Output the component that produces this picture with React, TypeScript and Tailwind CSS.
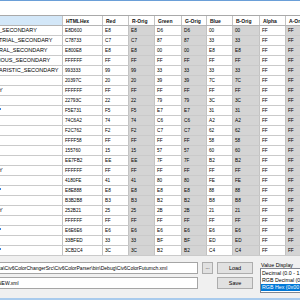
import React from 'react';

type Row = { name: string; kind?: 'text' | 'tick' | 'blank'; hex: string };

const rows: Row[] = [
  { name: '_SECONDARY', hex: 'E8D600' },
  { name: 'TRIAL_SECONDARY', hex: 'C78733' },
  { name: 'RAL_SECONDARY', hex: 'E800E8' },
  { name: 'IOUS_SECONDARY', hex: 'FFFFFF' },
  { name: 'ARISTIC_SECONDARY', hex: '993333' },
  { name: '', kind: 'blank', hex: '20397C' },
  { name: 'Y', hex: 'FFFFFF' },
  { name: '', kind: 'blank', hex: '22793C' },
  { name: '', kind: 'tick', hex: 'F5E731' },
  { name: '', kind: 'blank', hex: '74C6A2' },
  { name: '', kind: 'blank', hex: 'F2C762' },
  { name: '', kind: 'blank', hex: 'FFFF58' },
  { name: '', kind: 'blank', hex: '155760' },
  { name: '', kind: 'blank', hex: 'EE7FB2' },
  { name: 'Y', hex: 'FFFFFF' },
  { name: '', kind: 'blank', hex: '4180FE' },
  { name: '', kind: 'tick', hex: 'E8E888' },
  { name: '', kind: 'blank', hex: 'B3B2B8' },
  { name: 'Y', hex: '252B21' },
  { name: '', kind: 'blank', hex: 'FFFFFF' },
  { name: '', kind: 'tick', hex: 'E6E6E6' },
  { name: '', kind: 'blank', hex: '33BFED' },
  { name: '', kind: 'tick', hex: '3CB2C4' },
];

// column widths after the name column
const cols = [
  { label: 'HTMLHex', w: 'w-[40px]', orig: false },
  { label: 'Red', w: 'w-[26px]', orig: false },
  { label: 'R-Orig', w: 'w-[26px]', orig: true },
  { label: 'Green', w: 'w-[27px]', orig: false },
  { label: 'G-Orig', w: 'w-[25px]', orig: true },
  { label: 'Blue', w: 'w-[26px]', orig: false },
  { label: 'B-Orig', w: 'w-[27px]', orig: true },
  { label: 'Alpha', w: 'w-[26px]', orig: false },
  { label: 'A-Orig', w: 'w-[20px]', orig: true },
];

function cellValues(hex: string) {
  const r = hex.slice(0, 2);
  const g = hex.slice(2, 4);
  const b = hex.slice(4, 6);
  return [hex, r, r, g, g, b, b, 'FF', 'FF'];
}

export default function App() {
  return (
    <div
      className="w-[300px] h-[300px] overflow-hidden bg-[#f0f0f0] flex flex-col text-black"
      style={{ fontFamily: '"Liberation Sans", Arial, sans-serif' }}
    >
      <div className="h-px bg-[#6a9fd8] shrink-0" />
      <div className="h-[15px] bg-white shrink-0 border-b border-[#a9a9a9]" />

      {/* Grid */}
      <div className="bg-white shrink-0">
        {/* Header */}
        <div className="flex h-[10px] border-b border-[#b5b5b5] whitespace-nowrap">
          <div className="w-[63px] shrink-0 bg-[#d3e7f8] border-r border-[#c3c3c3]" />
          {cols.map((c) => (
            <div
              key={c.label}
              className={`${c.w} shrink-0 border-r border-[#c3c3c3] pl-[3px] text-[5px] font-bold leading-[10px] overflow-hidden text-[#111]`}
            >
              {c.label}
            </div>
          ))}
        </div>

        {rows.map((row, i) => (
          <div key={i} className="flex h-[10px] border-b border-[#cacaca] whitespace-nowrap">
            <div className="w-[63px] shrink-0 border-r border-[#c3c3c3] overflow-hidden relative text-[5.5px] leading-[9px]">
              {row.kind === 'tick' ? (
                <span className="absolute left-0 top-[2px] w-[1px] h-[2px] bg-[#3b87e0]" />
              ) : (
                <span className="ml-[-1px]">{row.name}</span>
              )}
            </div>
            {cellValues(row.hex).map((v, j) => (
              <div
                key={j}
                className={`${cols[j].w} shrink-0 border-r border-[#c3c3c3] pl-[2px] text-[4.7px] leading-[9px] overflow-hidden ${
                  cols[j].orig ? 'bg-[#d4d4d4]' : 'bg-white'
                }`}
              >
                {v}
              </div>
            ))}
          </div>
        ))}
      </div>

      {/* Bottom controls */}
      <div className="flex flex-1 text-[5px] whitespace-nowrap">
        <div className="w-[198px] shrink-0 flex flex-col pt-[6px] gap-[3px]">
          <div className="h-[12px] bg-white border border-[#a5a5a5] border-l-0 overflow-hidden leading-[10px]">
            <span className="ml-[-1px]">ta\Civ6ColorChangerSrc\Civ6ColorParser\bin\Debug\Civ6ColorFutumch.xml</span>
          </div>
          <div className="h-[12px] bg-white border border-[#a5a5a5] border-l-0 overflow-hidden leading-[10px]">
            <span className="ml-[-2px]">NEW.xml</span>
          </div>
        </div>
        <div className="ml-[4px] mt-[6px] w-[11px] h-[12px] bg-[#e1e1e1] border border-[#adadad] flex items-start justify-center leading-[8px]">
          ...
        </div>
        <div className="ml-[4px] w-[36px] flex flex-col pt-[6px] gap-[3px]">
          <div className="h-[12px] bg-[#e1e1e1] border border-[#adadad] flex items-center justify-center text-[5.5px]">
            Load
          </div>
          <div className="h-[12px] bg-[#e1e1e1] border border-[#adadad] flex items-center justify-center text-[5.5px]">
            Save
          </div>
        </div>
        <div className="ml-[5px] flex-1 flex flex-col pt-[6px] min-w-0">
          <div className="pl-[3px] text-[5.3px] leading-[6px]">Value Display</div>
          <div className="ml-[2px] bg-white border border-[#828790] border-r-0 flex flex-col text-[5.3px] leading-[7px] overflow-hidden h-[25px] pt-[1px]">
            <div className="pl-[1px]">Decimal (0.0 - 1.0)</div>
            <div className="pl-[1px]">RGB Decimal (0 - 255)</div>
            <div className="pl-[1px] bg-[#0078d7] text-white">RGB Hex (0x00 - 0xFF)</div>
          </div>
        </div>
      </div>
      <div className="h-[2px] bg-[#a9cbed] shrink-0" />
    </div>
  );
}
